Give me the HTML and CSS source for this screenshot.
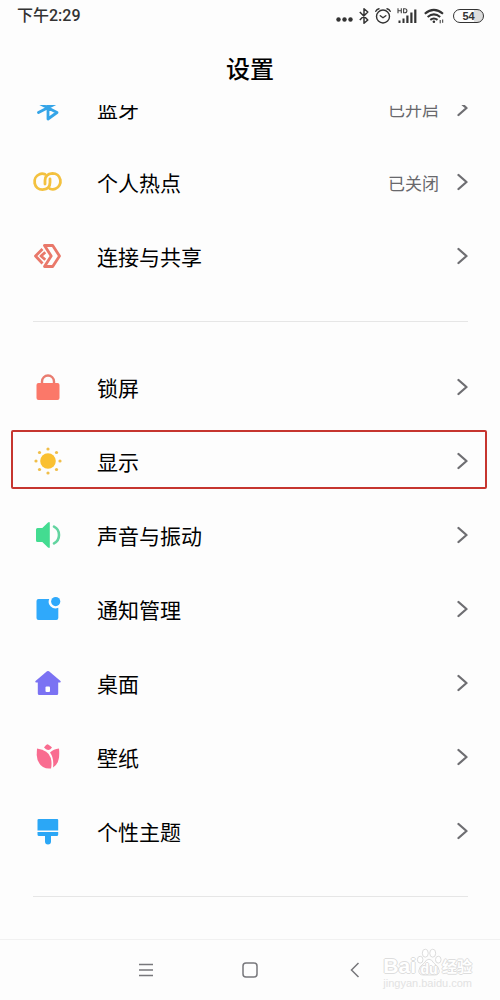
FILE: index.html
```html
<!DOCTYPE html>
<html lang="zh-CN">
<head>
  <meta charset="UTF-8" />
  <meta name="viewport" content="width=device-width, initial-scale=1.0"/>
  <title>设置</title>
  <link rel="stylesheet" href="styles.css">
</head>
<body>

  <svg width="0" height="0" class="defs" aria-hidden="true">
    <symbol id="arrow" viewBox="0 0 12 20">
      <path d="M2.500 3l8 7-8 7" fill="none" stroke="#6e6e72" stroke-width="2.300" stroke-linecap="round" stroke-linejoin="round"/>
    </symbol>
  </svg>

  <div class="status-bar">
    <span class="time">下午2:29</span>
    <div class="status-icons">
      <svg width="17" height="20" viewBox="0 0 17 20" fill="#333"><circle cx="2.500" cy="13.500" r="2.200"/><circle cx="8.500" cy="13.500" r="2.200"/><circle cx="14.500" cy="13.500" r="2.200"/></svg>
      <svg width="10" height="20" viewBox="0 0 10 20" fill="none" stroke="#333" stroke-width="1.500" stroke-linejoin="round"><path d="M.8 6l8 8L5 17.300V2.700L8.800 6l-8 8"/></svg>
      <svg width="16" height="20" viewBox="0 0 16 20" fill="none" stroke="#333" stroke-width="1.400" stroke-linecap="round" stroke-linejoin="round"><circle cx="8" cy="10.500" r="6.500"/><path d="M5.300 9.700l2.700 2 2.800-2M.8 5.300Q1.700 3.300 4 2.700M15.200 5.300Q14.300 3.300 12 2.700"/></svg>
      <svg width="21" height="20" viewBox="0 0 21 20"><g fill="none" stroke="#444" stroke-width="1.100"><path d="M1 2.200v5M4.300 2.200v5M1 4.700h3.300M6.600 2.700h1.200c2.800 0 2.800 4 0 4H6.600z"/></g><path d="M1.500 14.500h2V17h-2zM5.500 12.500h2V17h-2zM9.300 9.500h2.200V17H9.300zM13.300 6.500h2.200V17h-2.200zM17.200 3.500h2.200V17h-2.200z" fill="#333"/></svg>
      <svg width="21" height="20" viewBox="0 0 21 20" fill="none" stroke="#333" stroke-width="2"><path d="M.8 7.800q9-7.800 18.200 0M3.600 11q6.300-5.200 12.600 0M6.300 13.900q3.600-2.800 7.200 0"/><circle cx="9.900" cy="15.800" r="1.300" fill="#333" stroke="none"/><path d="M16.200 14v3.300M18.700 13.500v3.300" stroke-width="1"/></svg>
      <span class="battery">54</span>
    </div>
  </div>

  <h1>设置</h1>

  <main class="settings">
    <div class="group group-first">
      <a class="row" href="#">
        <svg class="icon" viewBox="0 0 32 32" fill="none" stroke="#35a5e8" stroke-width="2.800" stroke-linecap="round" stroke-linejoin="round"><path d="M6.500 11L25 20.500l-9 6.500V5l9 6L6.500 20.500"/></svg>
        <span class="label">蓝牙</span><span class="value">已开启</span>
        <svg class="arrow"><use href="#arrow"/></svg>
      </a>
      <a class="row" href="#">
        <svg class="icon" viewBox="0 0 32 32" fill="none" stroke="#f3c13f" stroke-width="2.800" stroke-linecap="round"><path d="M13 8.300Q10 7 7.500 8.300a8 8 0 0 0 3 15.400Q18 23.200 18 16.500V13"/><path d="M18 22.700Q21 24 23.500 22.700a8 8 0 0 0-3-15.400Q13 7.800 13 14.500V18"/></svg>
        <span class="label">个人热点</span><span class="value">已关闭</span>
        <svg class="arrow"><use href="#arrow"/></svg>
      </a>
      <a class="row" href="#">
        <svg class="icon" viewBox="0 0 32 32" fill="none" stroke="#e9786a" stroke-width="2.800" stroke-linejoin="round"><path d="M12.500 5.500h8.200L27.500 16l-6.800 10.500h-8.200L19.200 16z"/><path d="M10.500 9L3.500 16l7 7.500"/><path d="M13.300 12.300L9 16l4.300 3.700"/></svg>
        <span class="label">连接与共享</span>
        <svg class="arrow"><use href="#arrow"/></svg>
      </a>
    </div>

    <div class="group">
      <a class="row" href="#">
        <svg class="icon" viewBox="0 0 32 32"><rect x="4.500" y="12" width="23" height="17" rx="2" fill="#fb7869"/><path d="M10 12v-1.500a6 6 0 0 1 12 0V12" fill="none" stroke="#e97c70" stroke-width="2.400"/></svg>
        <span class="label">锁屏</span>
        <svg class="arrow"><use href="#arrow"/></svg>
      </a>
      <a class="row selected" href="#">
        <svg class="icon" viewBox="0 0 32 32" fill="#fac031"><circle cx="16" cy="16" r="7.800"/><g fill="#f0be49"><circle cx="16" cy="4" r="1.600"/><circle cx="16" cy="28" r="1.600"/><circle cx="4" cy="16" r="1.600"/><circle cx="28" cy="16" r="1.600"/><circle cx="7.500" cy="7.500" r="1.600"/><circle cx="24.500" cy="7.500" r="1.600"/><circle cx="7.500" cy="24.500" r="1.600"/><circle cx="24.500" cy="24.500" r="1.600"/></g></svg>
        <span class="label">显示</span>
        <svg class="arrow"><use href="#arrow"/></svg>
      </a>
      <a class="row" href="#">
        <svg class="icon" viewBox="0 0 32 32"><path d="M5.500 9h4.800L16 3.500q1.800-1.300 1.800.8v23.400q0 2.100-1.800.8L10.300 23H5.500Q4 23 4 21.500v-11Q4 9 5.500 9z" fill="#43dc91"/><path d="M22 7.700q5 2.500 5 8.300t-5 8.300" fill="none" stroke="#62d4a0" stroke-width="2.600" stroke-linecap="round"/></svg>
        <span class="label">声音与振动</span>
        <svg class="arrow"><use href="#arrow"/></svg>
      </a>
      <a class="row" href="#">
        <svg class="icon" viewBox="0 0 32 32" fill="#2fa9fb"><path d="M6.500 6h10.700a6.800 6.800 0 0 0 9.100 8.800V25q0 2-2 2H6.500q-2 0-2-2V8q0-2 2-2z"/><circle cx="23.700" cy="8.600" r="4.600"/></svg>
        <span class="label">通知管理</span>
        <svg class="arrow"><use href="#arrow"/></svg>
      </a>
      <a class="row" href="#">
        <svg class="icon" viewBox="0 0 32 32"><path d="M15 4.300q1-.8 2 0L28.500 14q.8 1.300-.5 1.500h-1.800v11q0 1.500-1.500 1.500H7.300q-1.500 0-1.500-1.500v-11H4q-1.300-.2-.5-1.500z" fill="#7b72f3"/><rect x="13.500" y="19.500" width="4.500" height="5.500" rx="1" fill="#fff"/></svg>
        <span class="label">桌面</span>
        <svg class="arrow"><use href="#arrow"/></svg>
      </a>
      <a class="row" href="#">
        <svg class="icon" viewBox="0 0 32 32" fill="#f96c90"><path d="M5 7.500Q16.500 9 18.800 17q1.300 5 .2 10.400-4 .8-8-1.400-6-4-6.300-12z"/><path d="M27 7.500q1.500 15-6 19 1.200-9.500-3-15Q21.500 8 27 7.500z"/><path d="M12 6.500q3.200-4.500 4.500-2.700 2.500 1.400 3.500 2.700-2 2.700-4 2.500-2-.5-4-2.500z"/></svg>
        <span class="label">壁纸</span>
        <svg class="arrow"><use href="#arrow"/></svg>
      </a>
      <a class="row" href="#">
        <svg class="icon" viewBox="0 0 32 32" fill="#2ba7f6"><path d="M6.800 4h18.400q1 0 1 1v10.500H5.500V5q0-1 1.300-1zM5.500 17h20.700v2.500q0 1.500-1.500 1.500H19v5.500a3 3 0 0 1-6 0V21H7q-1.500 0-1.500-1.500z"/></svg>
        <span class="label">个性主题</span>
        <svg class="arrow"><use href="#arrow"/></svg>
      </a>
    </div>
  </main>

  <nav class="nav-bar">
    <button aria-label="菜单"><svg width="16" height="16" viewBox="0 0 16 16"><path d="M1 2.500h14M1 8h14M1 13.500h14"/></svg></button>
    <button aria-label="主页"><svg width="16" height="16" viewBox="0 0 16 16"><rect x="1" y="1" width="14" height="14" rx="3"/></svg></button>
    <button aria-label="返回"><svg width="16" height="16" viewBox="0 0 16 16"><path d="M12.500 1L5.500 8l7 7"/></svg></button>
    <div class="watermark">
      <div class="brand">
        <span class="bai">Bai</span>
        <span class="paw">
          <svg width="26" height="30" viewBox="0 0 28 30" fill="#fff" stroke="#d9d9d9"><ellipse cx="4.500" cy="12.500" rx="3" ry="3.700"/><ellipse cx="10" cy="5.500" rx="3.200" ry="4.300"/><ellipse cx="18" cy="5.500" rx="3.200" ry="4.300"/><ellipse cx="24" cy="12.500" rx="3" ry="3.700"/><path d="M14 12q3 0 5 4 6 4 6 8.500 0 4.500-5 4.500H8q-5 0-5-4.500Q3 20 9 16q2-4 5-4z"/></svg>
          <span class="du">du</span>
        </span>
        <span class="exp">经验</span>
      </div>
      <div class="site">jingyan.baidu.com</div>
    </div>
  </nav>

</body>
</html>
```

FILE: styles.css
```css
* {
  box-sizing: border-box;
}
body {
  margin: 0;
  min-height: 100vh;
  display: flex;
  flex-direction: column;
  background: #fdfdfd;
  color: #000;
  font-family: "Noto Sans CJK SC", sans-serif;
}
.defs {
  position: absolute;
}
.status-bar {
  display: flex;
  justify-content: space-between;
  align-items: center;
  height: 32px;
  padding: 0 16px 0 17px;
  color: #333;
}
.time {
  font: 500 16px/20px Roboto, "Noto Sans CJK SC", sans-serif;
}
.status-icons {
  display: flex;
  align-items: center;
  gap: 6px;
}
.battery {
  width: 31px;
  height: 14px;
  margin-left: 2px;
  border: 1px solid #333;
  border-radius: 7px;
  background: linear-gradient(90deg, #fdfdfd 70%, #ddd 70%);
  font: 700 11px/12px "Liberation Sans", sans-serif;
  text-align: center;
}
h1 {
  margin: 0;
  height: 73px;
  padding-top: 18px;
  font-size: 24px;
  font-weight: 500;
  line-height: 36px;
  text-align: center;
}
.settings {
  flex: 1;
  overflow: hidden;
}
.group {
  padding: 28px 0;
}
.group::after {
  content: "";
  display: block;
  height: 1px;
  margin: 28px 32px -28px 33px;
  background: #e6e6e6;
}
/* list is scrolled, the first row goes under the title */
.group-first {
  margin-top: -34px;
  padding-top: 0;
}
.row {
  position: relative;
  display: flex;
  align-items: center;
  height: 74px;
  padding: 0 32px;
  color: inherit;
  text-decoration: none;
}
.icon {
  width: 32px;
  height: 32px;
  margin-right: 33px;
}
.label {
  flex: 1;
  font-size: 21px;
  line-height: 30px;
}
.value {
  margin-right: 17px;
  font-size: 17px;
  color: #68686c;
}
.arrow {
  width: 12px;
  height: 20px;
}
.selected::after {
  content: "";
  position: absolute;
  inset: 6px 13px 9px 11px;
  border: 2px solid #c6352f;
  border-radius: 2px;
}
.nav-bar {
  position: relative;
  display: flex;
  justify-content: center;
  align-items: center;
  gap: 64px;
  height: 61px;
  border-top: 1px solid #f1f1f1;
}
.nav-bar button {
  display: flex;
  justify-content: center;
  width: 40px;
  padding: 8px 0;
  border: none;
  background: none;
}
.nav-bar button svg {
  fill: none;
  stroke: #77777b;
  stroke-width: 1.5;
}
.watermark {
  position: absolute;
  right: 28px;
  bottom: 10px;
  color: #fff;
  font-family: "Liberation Sans", "Noto Sans CJK SC", sans-serif;
  text-shadow: 1px 0 #ddd, -1px 0 #ddd, 0 1px #ddd, 0 -1px #ddd;
}
.brand {
  display: flex;
  align-items: flex-end;
}
.bai {
  font-size: 21px;
  font-weight: 700;
  line-height: 22px;
}
.paw {
  display: grid;
}
.paw > * {
  grid-area: 1 / 1;
}
.du {
  align-self: end;
  font-size: 14px;
  font-weight: 700;
  line-height: 16px;
  text-align: center;
}
.exp {
  font-size: 15px;
  font-weight: 700;
  line-height: 20px;
}
.site {
  font-size: 11px;
  line-height: 13px;
  color: #e2e2e2;
  text-shadow: none;
}
```
